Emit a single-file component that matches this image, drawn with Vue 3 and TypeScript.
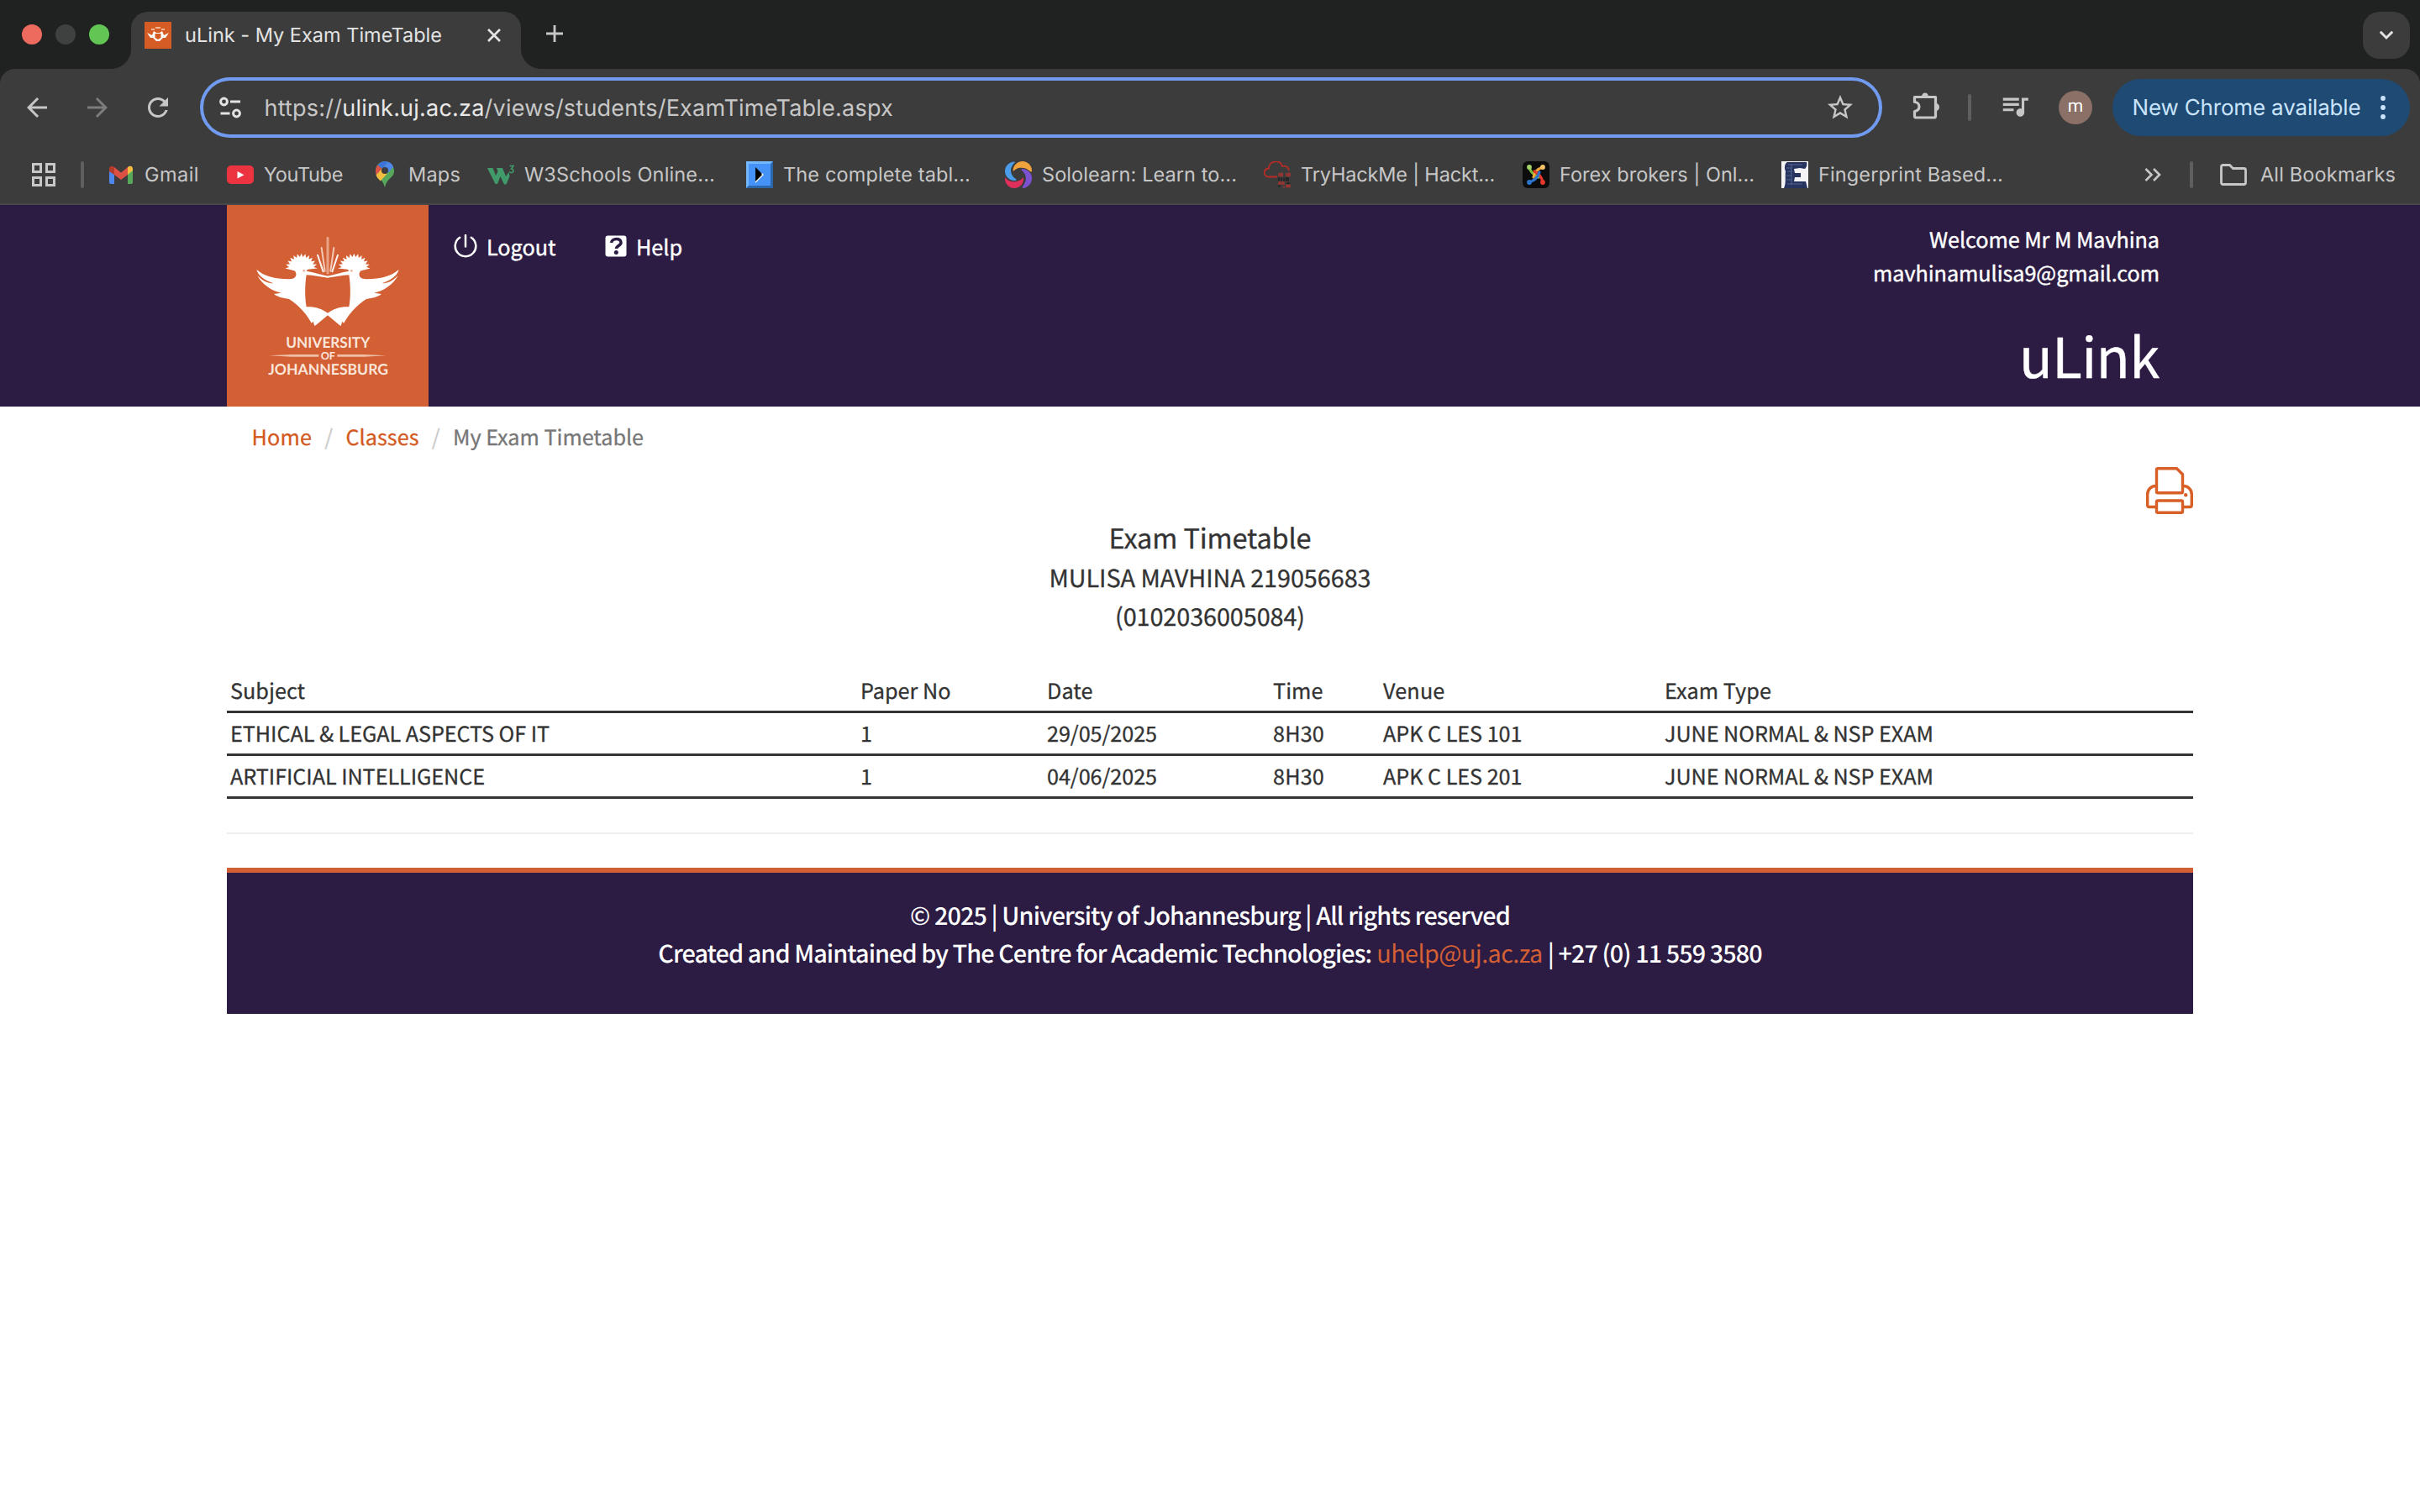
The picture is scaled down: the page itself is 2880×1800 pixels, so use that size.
<script setup lang="ts">
import type { Directive } from 'vue'

interface Bookmark {
  id: string
  label: string
  width: number
  slot: number
}

interface Exam {
  subject: string
  paper: string
  date: string
  time: string
  venue: string
  type: string
}

/** Tracks the letters of a label so that it takes up the given width in pixels. */
const vFit: Directive<HTMLElement, number> = {
  mounted(el, { value }) {
    const count = (el.textContent ?? '').trim().length
    const natural = el.getBoundingClientRect().width
    if (count > 0) el.style.letterSpacing = `${((value - natural) / count).toFixed(4)}px`
  },
}

const bookmarks: Bookmark[] = [
  { id: 'gmail', label: 'Gmail', width: 65, slot: 66 },
  { id: 'youtube', label: 'YouTube', width: 94, slot: 96 },
  { id: 'maps', label: 'Maps', width: 62, slot: 62 },
  { id: 'w3', label: 'W3Schools Online...', width: 227, slot: 232 },
  { id: 'table', label: 'The complete tabl...', width: 223, slot: 232 },
  { id: 'solo', label: 'Sololearn: Learn to...', width: 232, slot: 232 },
  { id: 'thm', label: 'TryHackMe | Hackt...', width: 231, slot: 232 },
  { id: 'forex', label: 'Forex brokers | Onl...', width: 232, slot: 232 },
  { id: 'finger', label: 'Fingerprint Based...', width: 220, slot: 232 },
]

const exams: Exam[] = [
  { subject: 'ETHICAL & LEGAL ASPECTS OF IT', paper: '1', date: '29/05/2025', time: '8H30', venue: 'APK C LES 101', type: 'JUNE NORMAL & NSP EXAM' },
  { subject: 'ARTIFICIAL INTELLIGENCE', paper: '1', date: '04/06/2025', time: '8H30', venue: 'APK C LES 201', type: 'JUNE NORMAL & NSP EXAM' },
]
const subjectWidths = [380, 303]

/** Feathered fan on the head of the hoopoe. */
function crest(): string {
  const spikes = 12
  const points: string[] = []
  for (let i = 0; i <= spikes * 2; i++) {
    const angle = Math.PI + (Math.PI * (i + 0.5)) / (spikes * 2 + 1)
    const r = i % 2 === 0 ? 58 : 45
    points.push(`${(296 + r * Math.cos(angle)).toFixed(1)} ${(242 + (r - 1) * Math.sin(angle)).toFixed(1)}`)
  }
  return `M${points.join('L')}L318 242L276 248Z`
}
const crestPath = crest()
</script>

<template>
  <div class="window">
    <div class="tabstrip">
      <div class="lights"><i class="red"></i><i class="dim"></i><i class="green"></i></div>
      <div class="tab">
        <svg class="fav" viewBox="0 0 32 32"><rect width="32" height="32" fill="#d55c25" /><path d="M3 13l6 3 2-5 3 2h4l3-2 2 5 6-3-4 6h-3l-4 4h-4l-4-4H7z" fill="#fff" /><path d="M12.500 14h7v5l-3.500 2-3.500-2z" fill="#d55c25" /><path d="M8 9h4M13 7h6M20 9h4" stroke="#f6b694" stroke-width="2" /></svg>
        <span class="tab-title"><span v-fit="306" class="fit">uLink - My Exam TimeTable</span></span>
        <svg class="close" viewBox="0 0 16 16"><path d="M1 1l14 14M15 1L1 15" stroke="#e3e3e3" stroke-width="2.700" /></svg>
      </div>
      <svg class="plus" viewBox="0 0 20 20"><path d="M10 0v20M0 10h20" stroke="#c7c7c7" stroke-width="2.800" /></svg>
      <div class="search-tabs"><svg viewBox="0 0 18 12"><path d="M1.800 1.800L9 9l7.200-7.200" fill="none" stroke="#e3e3e3" stroke-width="3" /></svg></div>
    </div>

    <div class="chrome">
      <div class="toolbar">
        <svg class="ic back" viewBox="0 0 24 24"><path d="M20 11H7.830l5.590-5.590L12 4l-8 8 8 8 1.410-1.410L7.830 13H20v-2z" /></svg>
        <svg class="ic fwd" viewBox="0 0 24 24"><path d="M12 4l-1.410 1.410L16.170 11H4v2h12.170l-5.580 5.590L12 20l8-8z" /></svg>
        <svg class="ic reload" viewBox="0 0 24 24"><path d="M17.650 6.350C16.200 4.900 14.210 4 12 4c-4.420 0-7.990 3.580-7.990 8s3.570 8 7.990 8c3.730 0 6.840-2.550 7.730-6h-2.080c-.820 2.330-3.040 4-5.650 4-3.310 0-6-2.690-6-6s2.690-6 6-6c1.660 0 3.140.690 4.220 1.780L13 11h7V4l-2.350 2.350z" /></svg>
        <div class="omnibox">
          <svg class="tune" viewBox="0 0 26 26"><g fill="none" stroke="#e3e3e3" stroke-width="3"><circle cx="5.500" cy="6" r="3.900" /><path d="M13 6h12M1.500 20h11" /><circle cx="20.500" cy="20" r="3.900" /></g></svg>
          <span class="url"><span v-fit="748.500" class="fit">https://<b>ulink.uj.ac.za</b>/views/students/ExamTimeTable.aspx</span></span>
          <svg class="ic star" viewBox="0 0 24 24"><path d="M22 9.240l-7.190-.620L12 2 9.190 8.630 2 9.240l5.460 4.730L5.820 21 12 17.270 18.180 21l-1.630-7.030L22 9.240zM12 15.400l-3.760 2.270 1-4.280-3.320-2.880 4.380-.380L12 6.100l1.710 4.040 4.380.380-3.320 2.880 1 4.280L12 15.400z" /></svg>
        </div>
        <svg class="puzzle" viewBox="0 0 34 34"><path d="M3.500 6.500h25v23a1.500 1.500 0 0 1-1.500 1.500H5a1.500 1.500 0 0 1-1.500-1.500v-6a5.500 5.500 0 0 0 0-11z" fill="none" stroke="#c7c7c7" stroke-width="3.200" stroke-linejoin="round" /><path d="M12 6a4 4.500 0 0 1 8 0zM29 14a4 4.500 0 0 1 0 9z" fill="#c7c7c7" /></svg>
        <i class="bar"></i>
        <svg class="music" viewBox="0 0 24 24"><path d="M15 6H3v2h12V6zm0 4H3v2h12v-2zM3 16h8v-2H3v2zM17 6v8.180c-.310-.110-.650-.180-1-.180-1.660 0-3 1.340-3 3s1.340 3 3 3 3-1.340 3-3V8h3V6h-5z" fill="#c7c7c7" /></svg>
        <span class="avatar">m</span>
        <div class="update"><span class="update-label"><span v-fit="272" class="fit">New Chrome available</span></span><svg viewBox="0 0 6 28"><circle cx="3" cy="3" r="2.900" /><circle cx="3" cy="14" r="2.900" /><circle cx="3" cy="25" r="2.900" /></svg></div>
      </div>

      <div class="bookmarks">
        <svg class="apps" viewBox="0 0 28 28"><g fill="none" stroke="#c7c7c7" stroke-width="3"><path d="M1.500 1.500h9v9h-9zM17.500 1.500h9v9h-9zM1.500 17.500h9v9h-9zM17.500 17.500h9v9h-9z" /></g></svg>
        <i class="bar first"></i>
        <div v-for="b in bookmarks" :key="b.id" class="bm">
          <svg v-if="b.id === 'gmail'" viewBox="0 0 32 32"><path d="M2 9v16a2 2 0 0 0 2 2h4V13z" fill="#4f86ec" /><path d="M24 27h4a2 2 0 0 0 2-2V9l-6 4z" fill="#57a85a" /><path d="M24 7v9l6-5V9c0-3-2.500-4-4.500-3z" fill="#f3bd42" /><path d="M2 9v3l6 4V7L6.500 6C4.500 5 2 6 2 9z" fill="#b43a2c" /><path d="M8 7v9l8 6 8-6V7l-8 6.500z" fill="#dd5144" /></svg>
          <svg v-else-if="b.id === 'youtube'" viewBox="0 0 32 32"><rect y="5" width="32" height="22" rx="5" fill="#eb3440" /><path d="M12.500 12v8.500l8-4.250z" fill="#fff" /></svg>
          <svg v-else-if="b.id === 'maps'" viewBox="0 0 32 32"><path d="M5 11.500C5 20 13 19 16 31c3-12 11-11 11-19.500C27 5 22 0 16 0S5 5 5 11.500z" fill="#57a85a" /><path d="M7.500 4.500L13 9l-7.500 7.500C4.500 12 5 7 7.500 4.500z" fill="#dd5144" /><path d="M7.500 4.500C11 0 16-1 20 .8L13 9z" fill="#3e73d9" /><path d="M20 .8c3 1 5 3.200 6.200 6L18.500 15 13.500 8.500z" fill="#4f86ec" /><path d="M5.600 16.500l7.800-8.500 5.600 6.500-8.300 9C8.500 21 6.500 19.500 5.600 16.500z" fill="#f3bd42" /><circle cx="16" cy="11" r="4" fill="#3c3c3c" /></svg>
          <svg v-else-if="b.id === 'w3'" viewBox="0 0 32 32"><path d="M0 8h6.500l3.500 9 2.500-5-1.500-4h7l4 10 3.500-5 1 5-4 9.500h-2.500L15.500 18l-3.500 9H9.500z" fill="#419a69" /><path d="M26.500 5.500h4.500l-2.500 3.500c3.500 0 3 4.500 0 4.500-1 0-1.800-.3-2.300-1" fill="none" stroke="#419a69" stroke-width="1.500" /></svg>
          <svg v-else-if="b.id === 'table'" viewBox="0 0 32 32"><rect width="32" height="32" fill="#4593f8" /><path d="M0 0h32l-3 3H3v26l-3 3z" fill="#72b8fb" /><path d="M32 0v32H0l3-3h26V3z" fill="#2c67ac" /><path d="M11 7l9 9-9 9z" fill="#000" /><path d="M11 25l9-9-1.500-1.500" fill="none" stroke="#fff" stroke-width="1.300" /></svg>
          <svg v-else-if="b.id === 'solo'" viewBox="0 0 32 32"><path d="M10 .5C3 2 0 7 0 12c0 6 5 11 12 11 1.500 0 2-1 1-2C8 18 5.500 12 8 6.500 9 4 11 2 12 1.200 11.500.5 11 .300 10 .5z" fill="#4a9deb" /><path d="M9.500 11C10 4 15 0 21 0c6 0 11 5 11 11 0 1.500-1 2-2 1-4-4-9-5-14-4-2.500.7-4 2-5.500 3.500z" fill="#f0a33c" /><path d="M20 9c7 0 12 5 12 11 0 6-4 11-10 12-1.500 0-1.500-1-1-2 4-5 5-10 2.500-15-1-2-3-3.500-4-5z" fill="#7c52d3" /><path d="M1 20c3 4 8 5 13 4 3-.6 6-2.500 8-5 1 7-4 13-11 13C5 32 0 27 0 21c0-1 .5-1.500 1-1z" fill="#de2f5d" /></svg>
          <svg v-else-if="b.id === 'thm'" viewBox="0 0 32 32"><path d="M16 18.500H6C-1 18-1 9 6 8.500 6-2 21-2 22 6c4-1 7 1 8 5" fill="none" stroke="#b92c27" stroke-width="1.800" /><path d="M18 14v4M20 14.500h2v3h-2zM27 14v4M29 14.500h2v3h-2zM18 25h2v2h-2zM22 25h2v2h-2zM27 24.500h1M23 30.500h2M27 28.500h4v2h-4z" fill="none" stroke="#a83431" stroke-width="1.400" /><path d="M18 19.500v4M21 19.500v4M24 19.500v4M26.500 20h2.500v3h-2.500zM27 26h4M17 29.500h3" fill="none" stroke="#1f1f1f" stroke-width="1.400" /></svg>
          <svg v-else-if="b.id === 'forex'" viewBox="0 0 32 32"><rect width="32" height="32" rx="6" fill="#0c0c0c" /><g fill="none" stroke-width="3.200" stroke-linecap="round"><path d="M8 7c1 6 5 9 11 12" stroke="#7ebd3c" /><path d="M24 7c-6 2-10 6-11 12" stroke="#f0a83a" /><path d="M24 25c-1-6-4-10-10-13" stroke="#e6392b" /><path d="M8 25c6-2 10-5 12-12" stroke="#2c75cc" /></g><circle cx="8" cy="7" r="2.900" fill="#a3d268" /><circle cx="24" cy="7" r="2.900" fill="#f6c468" /><circle cx="8" cy="25" r="2.900" fill="#2c75cc" /><circle cx="24" cy="25" r="2.900" fill="#e6392b" /></svg>
          <svg v-else viewBox="0 0 32 32"><rect width="32" height="32" fill="#f4f4f6" /><path d="M7 1h23c1 3 0 6-2 8l-6-1-7 1 1 5h7v5h-7l-1 5h14l2 8H3c3-7 1-12 2-20C3 7 4 3 7 1z" fill="#27345f" /><path d="M8 4h17M6 8h6M7 12h6M6 17h6M6 22h6M7 27h18M12 3v25" stroke="#5a6a96" stroke-width=".9" /></svg>
          <span class="bm-label" :style="{ width: b.slot + 'px' }"><span v-fit="b.width" class="fit">{{ b.label }}</span></span>
        </div>
        <svg class="more" viewBox="0 0 20 16"><path d="M1.500 1l7 7-7 7M11 1l7 7-7 7" fill="none" stroke="#c7c7c7" stroke-width="2.600" /></svg>
        <i class="bar last"></i>
        <svg class="folder" viewBox="0 0 32 26"><path d="M1.500 3.500a2 2 0 0 1 2-2h8l4 4h13a2 2 0 0 1 2 2v15a2 2 0 0 1-2 2h-25a2 2 0 0 1-2-2z" fill="none" stroke="#c7c7c7" stroke-width="2.800" /></svg>
        <span class="all"><span v-fit="161" class="fit">All Bookmarks</span></span>
      </div>
    </div>

    <header class="banner">
      <div class="container banner-row">
        <svg class="logo" viewBox="0 0 240 240">
          <rect width="240" height="240" fill="#d35f35" />
          <g transform="translate(-10 -4) scale(.333333)">
            <g fill="#fff">
              <g id="bird">
                <path :d="crestPath" />
                <path d="M136 243C165 268 200 275 250 277C276 278 284 262 272 246L296 225L320 240L314 248C345 254 370 262 391 266L391 272C365 270 340 262 314 262C308 300 308 345 314 376C340 374 370 382 391 399L391 405L349 440L343 444L338 428L332 434C322 412 288 370 252 348C230 345 210 340 198 330L224 326C190 320 155 294 139 264C158 284 178 292 196 292C165 280 142 266 136 243Z" />
                <circle cx="305" cy="247" r="4" fill="#edb294" />
              </g>
              <use href="#bird" transform="translate(780 0) scale(-1 1)" />
            </g>
            <g stroke="#f3c9b4" stroke-width="6" stroke-linecap="round">
              <path d="M390 130V255" stroke="#e9a486" stroke-width="9" />
              <path d="M368 165L380 248M412 165L400 248" />
              <path d="M354 191L374 250M426 191L406 250" stroke="#fdf3ee" />
            </g>
            <path d="M180 550l80-4h98v8h-98zM600 550l-80-4h-96v8h96z" fill="#efbfa6" />
            <g class="logo-text">
              <text x="241" y="521" font-size="53" textLength="300" lengthAdjust="spacingAndGlyphs">UNIVERSITY</text>
              <text x="365" y="563" font-size="37" textLength="52" lengthAdjust="spacingAndGlyphs">OF</text>
              <text x="178" y="617" font-size="53" textLength="428" lengthAdjust="spacingAndGlyphs">JOHANNESBURG</text>
            </g>
          </g>
        </svg>
        <nav class="menu">
          <svg class="power" viewBox="0 0 28 28"><path d="M7.200 3.700a12.300 12.300 0 1 0 13.600 0M14 1v13.500" fill="none" stroke="#fff" stroke-width="2.500" stroke-linecap="round" /></svg>
          <span class="menu-text logout"><span v-fit="82.500" class="fit">Logout</span></span>
          <svg class="question" viewBox="0 0 26 26"><rect x=".500" y=".500" width="25" height="25" rx="3" fill="#fff" /><path d="M7.500 9c.800-6 11.500-6 11.500-.300 0 3.800-5.500 3.600-5.500 7.300" fill="none" stroke="#2c1b42" stroke-width="3.600" /><circle cx="13.300" cy="20.600" r="2.500" fill="#2c1b42" /></svg>
          <span class="menu-text"><span v-fit="55" class="fit">Help</span></span>
        </nav>
        <div class="account">
          <div class="who"><span v-fit="274" class="fit">Welcome Mr M Mavhina</span></div>
          <div class="who"><span v-fit="341" class="fit">mavhinamulisa9@gmail.com</span></div>
          <div class="brand"><span v-fit="167" class="fit">uLink</span></div>
        </div>
      </div>
    </header>

    <main class="container">
      <div class="crumbs">
        <a><span v-fit="71.500" class="fit">Home</span></a><i>/</i>
        <a><span v-fit="87" class="fit">Classes</span></a><i>/</i>
        <span><span v-fit="227" class="fit">My Exam Timetable</span></span>
      </div>
      <div class="print">
        <svg viewBox="0 0 56 56"><g fill="none" stroke="#d85f26" stroke-width="3.400" stroke-linejoin="round"><path d="M14 1.700h22.500l7 7v20.600a1.500 1.500 0 0 1-1.500 1.500H14a1.500 1.500 0 0 1-1.500-1.500V3.200A1.500 1.500 0 0 1 14 1.700z" /><path d="M12 22.500a10 10 0 0 0-10.300 10v13a2 2 0 0 0 2 2H12M44 22.500a10 10 0 0 1 10.300 10v13a2 2 0 0 1-2 2H44" /><rect x="12.500" y="40" width="31" height="14.300" rx="1.500" /></g><circle cx="47.200" cy="33.300" r="2.200" fill="#d85f26" /></svg>
      </div>
      <div class="title"><span v-fit="241" class="fit">Exam Timetable</span></div>
      <div class="sub"><span v-fit="383" class="fit">MULISA MAVHINA 219056683</span></div>
      <div class="sub"><span v-fit="226" class="fit">(0102036005084)</span></div>

      <div class="table">
        <div class="row head">
          <span><span v-fit="89" class="fit">Subject</span></span>
          <span><span v-fit="107.500" class="fit">Paper No</span></span>
          <span><span v-fit="54.500" class="fit">Date</span></span>
          <span><span v-fit="59.500" class="fit">Time</span></span>
          <span><span v-fit="73.500" class="fit">Venue</span></span>
          <span><span v-fit="127" class="fit">Exam Type</span></span>
        </div>
        <div v-for="(e, i) in exams" :key="e.date" class="row">
          <span><span v-fit="subjectWidths[i]" class="fit">{{ e.subject }}</span></span>
          <span>{{ e.paper }}</span>
          <span><span v-fit="131" class="fit">{{ e.date }}</span></span>
          <span><span v-fit="61" class="fit">{{ e.time }}</span></span>
          <span><span v-fit="165.500" class="fit">{{ e.venue }}</span></span>
          <span><span v-fit="320" class="fit">{{ e.type }}</span></span>
        </div>
      </div>

      <div class="rule"></div>

      <footer>
        <div class="foot"><span v-fit="714" class="fit">© 2025 | University of Johannesburg | All rights reserved</span></div>
        <div class="foot">
          <span v-fit="849" class="fit">Created and Maintained by The Centre for Academic Technologies:</span>
          <a v-fit="197.500" class="fit">uhelp@uj.ac.za</a>
          <span v-fit="255" class="fit">| +27 (0) 11 559 3580</span>
        </div>
      </footer>
    </main>
  </div>
</template>

<style>
body {
  margin: 0;
  background: #fff;
}
</style>

<style scoped>
.window {
  width: 2880px;
  height: 1800px;
  overflow: hidden;
  background: #fff;
  font-family: "Noto Sans CJK SC", "Noto Sans", sans-serif;
  text-rendering: geometricPrecision;
}
svg {
  display: block;
  flex: none;
}
.fit {
  display: inline-block;
  white-space: nowrap;
}
.tabstrip {
  display: flex;
  align-items: flex-start;
  height: 82px;
  background: #202221;
  font: 23.5px/54px Inter, "Liberation Sans", sans-serif;
}
.lights {
  display: flex;
  gap: 16px;
  padding: 29px 26px 0;
}
.lights i {
  width: 24px;
  height: 24px;
  border-radius: 50%;
}
.red { background: #ed6a5f; }
.dim { background: #3f4141; }
.green { background: #61c654; }
.tab {
  position: relative;
  display: flex;
  align-items: flex-start;
  width: 464px;
  height: 68px;
  margin-top: 14px;
  border-radius: 20px 20px 0 0;
  background: #3c3c3c;
  color: #e3e3e3;
}
.tab::before,
.tab::after {
  content: "";
  position: absolute;
  bottom: 0;
  width: 24px;
  height: 24px;
}
.tab::before {
  left: -24px;
  background: radial-gradient(circle at 0 0, transparent 23.5px, #3c3c3c 24.5px);
}
.tab::after {
  right: -24px;
  background: radial-gradient(circle at 100% 0, transparent 23.5px, #3c3c3c 24.5px);
}
.fav {
  width: 32px;
  height: 32px;
  margin: 12px 16px 0 16px;
}
.tab-title {
  width: 360px;
  padding-top: 1px;
}
.close {
  width: 16px;
  height: 16px;
  margin: 20px 0 0 0;
}
.plus {
  width: 20px;
  height: 20px;
  margin: 30px 0 0 30px;
}
.search-tabs {
  display: flex;
  align-items: center;
  justify-content: center;
  width: 56px;
  height: 56px;
  margin: 14px 12px 0 auto;
  border-radius: 20px;
  background: #3c3c3c;
}
.search-tabs svg {
  width: 18px;
  height: 12px;
}
.chrome {
  position: relative;
  height: 160px;
  border-bottom: 2px solid #484848;
  background: #3c3c3c;
  font-family: Inter, "Liberation Sans", sans-serif;
}
.chrome::before,
.chrome::after {
  content: "";
  position: absolute;
  top: 0;
  width: 18px;
  height: 18px;
}
.chrome::before {
  left: 0;
  background: radial-gradient(circle at 100% 100%, transparent 17.5px, #202221 18.5px);
}
.chrome::after {
  right: 0;
  background: radial-gradient(circle at 0 100%, transparent 17.5px, #202221 18.5px);
}
.toolbar {
  display: flex;
  align-items: center;
  height: 72px;
  padding: 10px 12px 10px 26px;
}
.ic {
  width: 36px;
  height: 36px;
  fill: #c7c7c7;
}
.fwd {
  margin-left: 36px;
  fill: #7c7c7c;
}
.reload {
  margin-left: 36px;
}
.omnibox {
  box-sizing: border-box;
  display: flex;
  align-items: center;
  width: 2002px;
  height: 72px;
  margin-left: 32px;
  padding: 0 28px 0 19px;
  border: 4px solid #709bf0;
  border-radius: 36px;
  color: #c7c7c7;
  font-size: 27px;
}
.tune {
  width: 26px;
  height: 26px;
}
.url {
  flex: 1;
  margin-left: 27.5px;
}
.url b {
  color: #e8e8e8;
  font-weight: 400;
}
.puzzle {
  width: 34px;
  height: 34px;
  margin: -4px 0 0 35px;
}
.bar {
  width: 4px;
  height: 32px;
  border-radius: 2px;
  background: #5f5f5f;
}
.toolbar .bar {
  margin-left: 33px;
}
.music {
  width: 38px;
  height: 38px;
  margin: -4px 0 0 33px;
}
.avatar {
  width: 40px;
  height: 40px;
  margin-left: 33px;
  border-radius: 50%;
  background: #8a7066;
  color: #fff;
  font: 21px/38px Roboto, sans-serif;
  text-align: center;
}
.update {
  display: flex;
  align-items: center;
  box-sizing: border-box;
  width: 354px;
  height: 68px;
  margin-left: auto;
  padding-left: 23.5px;
  border-radius: 34px;
  background: #1f4a73;
  color: #c9e4fb;
  font-size: 26px;
}
.update-label {
  width: 295.5px;
  padding-top: 1px;
}
.update svg {
  width: 6px;
  height: 28px;
  fill: #c9e4fb;
}
.bookmarks {
  display: flex;
  align-items: center;
  height: 68px;
  padding-left: 38px;
  color: #c7c7c7;
  font-size: 23.5px;
}
.apps {
  width: 28px;
  height: 28px;
}
.bar.first {
  margin: 0 28px 0 30px;
}
.bm {
  display: flex;
  align-items: center;
  margin-right: 32px;
}
.bm svg {
  width: 32px;
  height: 32px;
}
.bm-label {
  margin-left: 12px;
  padding-bottom: 2px;
  white-space: nowrap;
}
.more {
  width: 20px;
  height: 16px;
  margin-left: 124px;
}
.bar.last {
  margin: 0 32px 0 34px;
}
.folder {
  width: 32px;
  height: 26px;
}
.all {
  margin-left: 16px;
  padding-bottom: 2px;
}
.container {
  width: 2340px;
  margin: 0 auto;
}
.banner {
  height: 240px;
  background: #2c1b42;
  color: #fff;
  font-size: 25.2px;
  -webkit-text-stroke: 0.4px currentColor;
}
.banner-row {
  display: flex;
  align-items: flex-start;
}
.logo {
  width: 240px;
  height: 240px;
  -webkit-text-stroke: 0;
}
.logo-text {
  fill: #fbe6da;
  font-family: Lato, sans-serif;
  font-weight: 700;
}
.menu {
  display: flex;
  align-items: center;
  height: 40px;
  margin: 29px 0 0 30px;
}
.power {
  width: 28px;
  height: 28px;
}
.menu-text {
  line-height: 40px;
  margin-left: 11px;
  padding-top: 2px;
}
.logout {
  width: 141px;
}
.question {
  width: 26px;
  height: 26px;
}
.account {
  margin: 21px 40px 0 auto;
  text-align: right;
}
.who {
  height: 40px;
  line-height: 40px;
}
.brand {
  margin-top: 29px;
  font-size: 65.5px;
  line-height: 96px;
}
.crumbs {
  display: flex;
  height: 72px;
  padding-left: 29.5px;
  line-height: 72px;
  font-size: 25.2px;
  color: #777;
  -webkit-text-stroke: 0.3px currentColor;
}
.crumbs a {
  color: #d35a1e;
}
.crumbs i {
  width: 40.5px;
  color: #ccc;
  font-style: normal;
  text-align: center;
}
.print {
  display: flex;
  justify-content: flex-end;
}
.print svg {
  width: 56px;
  height: 56px;
}
.title,
.sub {
  color: #333;
  text-align: center;
  -webkit-text-stroke: 0.3px currentColor;
}
.title {
  height: 50px;
  margin-top: 3px;
  font-size: 32.5px;
  line-height: 50px;
}
.sub {
  height: 46px;
  font-size: 28.8px;
  line-height: 46px;
}
.table {
  margin-top: 41px;
  color: #333;
  font-size: 25.2px;
  -webkit-text-stroke: 0.3px currentColor;
}
.row {
  display: grid;
  grid-template-columns: 750px 222px 269px 131px 335px 1fr;
  height: 48px;
  padding-left: 4px;
  border-bottom: 3px solid #333;
  line-height: 48px;
}
.rule {
  height: 2px;
  margin: 40px 0;
  background: #eee;
}
footer {
  height: 140px;
  padding-top: 28px;
  border-top: 6px solid #d35f35;
  background: #2c1b42;
  color: #fff;
  font-size: 28.8px;
  font-weight: 500;
  line-height: 45px;
}
.foot {
  display: flex;
  justify-content: center;
  gap: 6px;
  height: 45px;
}
.foot a {
  color: #d35f35;
  font-weight: 400;
}
</style>
